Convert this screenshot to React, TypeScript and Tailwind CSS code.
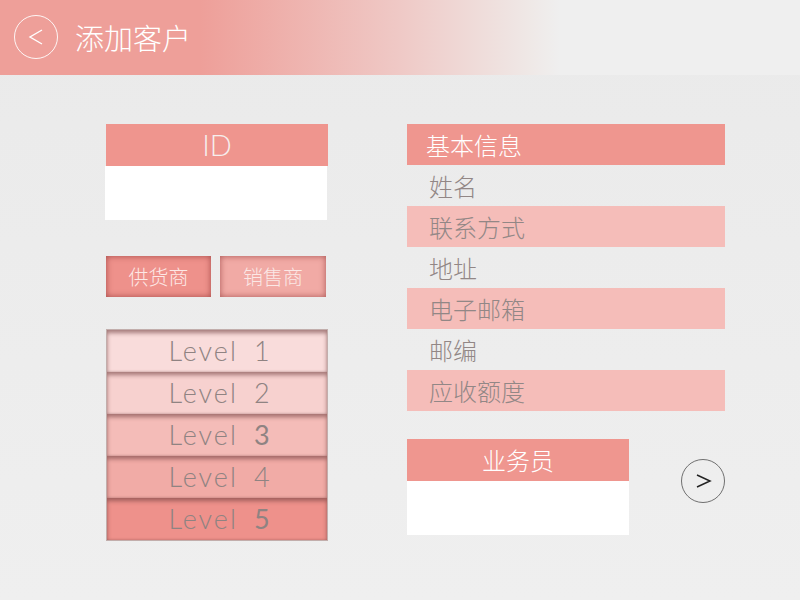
const levels = [
    { n: "1", bg: "bg-[#f9dcdb]", bold: false },
    { n: "2", bg: "bg-[#f7d1cf]", bold: false },
    { n: "3", bg: "bg-[#f4bcb8]", bold: true },
    { n: "4", bg: "bg-[#f1aba6]", bold: false },
    { n: "5", bg: "bg-[#ee918b]", bold: true },
]

const infoRows = [
    { label: "姓名", pink: false },
    { label: "联系方式", pink: true },
    { label: "地址", pink: false },
    { label: "电子邮箱", pink: true },
    { label: "邮编", pink: false },
    { label: "应收额度", pink: true },
]

const cjk = { fontFamily: '"Noto Sans CJK SC", "Noto Sans", sans-serif' }
const latin = { fontFamily: '"Lato", "Open Sans", sans-serif' }

export default function App() {
    return (
        <div className="w-[800px] h-[600px] bg-gradient-to-b from-[#eaeaea] to-[#efefef] flex flex-col overflow-hidden" style={cjk}>
            <header className="h-[75px] flex items-center pl-[14px] gap-[17px] bg-[linear-gradient(90deg,#ee9f99_0%,#ee9f99_25%,#efc9c6_50%,#efe8e6_66%,#efefef_70%,#efefef_100%)]">
                <div className="w-[44px] h-[44px] rounded-full border border-white/90 flex items-center justify-center mt-[-1px]">
                    <svg width="20" height="20" viewBox="0 0 20 20" fill="none" stroke="white" strokeWidth="1.4">
                        <path d="M16 3 L4 10 L16 17" />
                    </svg>
                </div>
                <h1 className="text-[29px] font-light text-white leading-none">添加客户</h1>
            </header>

            <main className="flex pt-[49px] pl-[106px] gap-[79px]">
                <div className="w-[222px] flex flex-col">
                    <div className="flex flex-col">
                        <div className="h-[42px] bg-[#ef958e] flex items-center justify-center text-[29px] font-light text-[#f6eeed]" style={latin}>ID</div>
                        <div className="h-[54px] bg-white ml-[-1px] mr-[1px]"></div>
                    </div>

                    <div className="flex gap-[9px] mt-[36px]">
                        <div className="w-[105px] h-[41px] bg-[#ee918b] shadow-[inset_0_0_6px_rgba(140,50,50,0.75)] flex items-center justify-center text-[20px] font-light text-[#fde8e6]">供货商</div>
                        <div className="w-[106px] h-[41px] bg-[#f1aaa5] shadow-[inset_0_0_6px_rgba(140,50,50,0.7)] flex items-center justify-center text-[20px] font-light text-[#fbe8e6]">销售商</div>
                    </div>

                    <div className="mt-[32px] flex flex-col border border-[#c2aeac]">
                        {levels.map((l) => (
                            <div
                                key={l.n}
                                className={`h-[42px] ${l.bg} shadow-[inset_0_3px_4px_rgba(110,60,60,0.6),inset_0_-1px_2px_rgba(110,60,60,0.2)] flex items-center justify-center gap-[16px] text-[27px] text-[#8f8382] tracking-[2px] pl-[6px]`}
                                style={latin}
                            >
                                <span className="font-light">Level</span>
                                <span className={l.bold ? "font-normal" : "font-light"}>{l.n}</span>
                            </div>
                        ))}
                    </div>
                </div>

                <div className="w-[318px] flex flex-col">
                    <div className="flex flex-col">
                        <div className="h-[41px] bg-[#ef968f] flex items-center pl-[19px] text-[24px] font-light text-white">基本信息</div>
                        {infoRows.map((r) => (
                            <div
                                key={r.label}
                                className={`h-[41px] flex items-center pl-[22px] text-[24px] font-light text-[#928786] ${r.pink ? "bg-[#f5bdb9]" : ""}`}
                            >
                                {r.label}
                            </div>
                        ))}
                    </div>

                    <div className="flex mt-[28px]">
                        <div className="w-[222px] flex flex-col">
                            <div className="h-[42px] bg-[#ef968f] flex items-center justify-center text-[24px] font-light text-white">业务员</div>
                            <div className="h-[54px] bg-white"></div>
                        </div>
                        <div className="ml-auto mt-[20px] w-[44px] h-[44px] rounded-full border border-[#707070] flex items-center justify-center">
                            <svg width="18" height="18" viewBox="0 0 18 18" fill="none" stroke="#222" strokeWidth="1.5">
                                <path d="M3 3 L16 9 L3 15" />
                            </svg>
                        </div>
                    </div>
                </div>
            </main>
        </div>
    )
}
